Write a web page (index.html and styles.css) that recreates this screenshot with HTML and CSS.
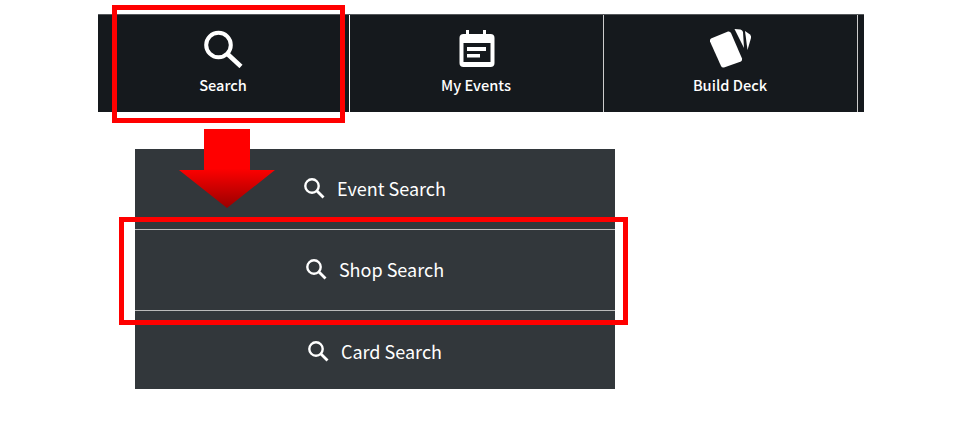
FILE: index.html
```html
<!DOCTYPE html>
<html lang="en">
<head>
    <meta charset="UTF-8" />
    <title>Search menu</title>
    <link rel="stylesheet" href="styles.css">
</head>
<body>

<nav class="tabs">
    <a class="tab">
        <svg class="tab-icon" viewBox="0 0 40 40" width="40" height="40">
            <circle cx="14.500" cy="17" r="12.300" fill="none" stroke="#fff" stroke-width="4"/>
            <path d="M23.500 26L37 38.500" fill="none" stroke="#fff" stroke-width="4.500"/>
        </svg>
        <span>Search</span>
    </a>
    <a class="tab">
        <svg class="tab-icon" viewBox="0 0 40 40" width="40" height="40">
            <rect x="2.500" y="6" width="35" height="33" rx="4" fill="#fff"/>
            <rect x="9" y="2" width="3" height="6" fill="#fff"/>
            <rect x="26" y="2" width="3" height="6" fill="#fff"/>
            <rect x="6.500" y="15" width="27" height="19" fill="#15191d"/>
            <rect x="10" y="19" width="19" height="4" fill="#fff"/>
            <rect x="10" y="26" width="13" height="3.500" fill="#fff"/>
        </svg>
        <span>My Events</span>
    </a>
    <a class="tab">
        <svg class="tab-icon" viewBox="0 0 44 40" width="44" height="40">
            <path d="M2 10.500L19 3.500Q21 3 22 5L33 30.500Q33.500 32.500 32 33.500L15 39.500Q13 40 12 38L1 13.500Q.5 11.500 2 10.500Z" fill="#fff"/>
            <path d="M25.500 1L31.500 1.500Q33.500 2 34 4L35 20Z" fill="#fff"/>
            <path d="M36 3L41 6.500Q42.500 8 42 10L38.500 22Z" fill="#fff"/>
        </svg>
        <span>Build Deck</span>
    </a>
    <a class="tab tab-cut"></a>
</nav>

<div class="menu">
    <a class="menu-item">
        <svg viewBox="0 0 22 22" width="22" height="22">
            <circle cx="8" cy="9" r="6.700" fill="none" stroke="#fff" stroke-width="2.400"/>
            <path d="M13 14L19.500 20.500" fill="none" stroke="#fff" stroke-width="2.800"/>
        </svg>
        <span>Event Search</span>
    </a>
    <a class="menu-item">
        <svg viewBox="0 0 22 22" width="22" height="22">
            <circle cx="8" cy="9" r="6.700" fill="none" stroke="#fff" stroke-width="2.400"/>
            <path d="M13 14L19.500 20.500" fill="none" stroke="#fff" stroke-width="2.800"/>
        </svg>
        <span>Shop Search</span>
    </a>
    <a class="menu-item">
        <svg viewBox="0 0 22 22" width="22" height="22">
            <circle cx="8" cy="9" r="6.700" fill="none" stroke="#fff" stroke-width="2.400"/>
            <path d="M13 14L19.500 20.500" fill="none" stroke="#fff" stroke-width="2.800"/>
        </svg>
        <span>Card Search</span>
    </a>
</div>

<!-- annotations drawn over the screenshot -->
<div class="frame frame-tab"></div>
<div class="frame frame-shop"></div>
<svg class="arrow" viewBox="0 0 96 79" width="96" height="79">
    <defs>
        <linearGradient id="arrowFill" x1="0" y1="0" x2="0" y2="1">
            <stop offset="0.5" stop-color="#ff0000"/>
            <stop offset="1" stop-color="#990000"/>
        </linearGradient>
    </defs>
    <path d="M25 0H71V41H96L48 79L0 41H25Z" fill="url(#arrowFill)"/>
</svg>

</body>
</html>
```

FILE: styles.css
```css
body {
    font-family: "Noto Sans CJK JP", "Noto Sans", sans-serif;
    background: #fff;
    color: #fff;
    margin: 0;
    padding: 14px 0 0 98px;
}
.tabs {
    display: flex;
    width: 766px;
    height: 98px;
    background: #15191d;
    border-top: 1px solid #55585b;
    box-sizing: border-box;
}
.tab {
    width: 254px;
    flex-shrink: 0;
    display: flex;
    flex-direction: column;
    align-items: center;
    border-right: 1px solid #ccc;
    box-sizing: border-box;
    padding-top: 13px;
    font-size: 14.600px;
    font-weight: 500;
    line-height: 22px;
}
.tab span {
    margin-right: 1px;
}
.tab:first-child {
    width: 252px;
    border-right-color: #fff;
}
.tab-icon {
    margin-bottom: 6px;
}
.tab-cut {
    width: 6px;
    border-right: none;
    padding: 0;
}
.menu {
    width: 480px;
    margin: 37px 0 0 37px;
    background: #32373b;
}
.menu-item {
    display: flex;
    align-items: center;
    justify-content: center;
    gap: 11px;
    height: 81px;
    box-sizing: border-box;
    padding-bottom: 2px;
    font-size: 18px;
    line-height: 26px;
    border-bottom: 1px solid #bbb;
}
.menu-item:last-child {
    height: 78px;
    padding-top: 2px;
    padding-bottom: 0;
    border-bottom: none;
}
.frame {
    position: absolute;
    box-sizing: border-box;
    border: 5px solid #ff0000;
}
.frame-tab {
    left: 112px;
    top: 5px;
    width: 233px;
    height: 118px;
}
.frame-shop {
    left: 119px;
    top: 217px;
    width: 509px;
    height: 108px;
}
.arrow {
    position: absolute;
    left: 179px;
    top: 129px;
}
```
